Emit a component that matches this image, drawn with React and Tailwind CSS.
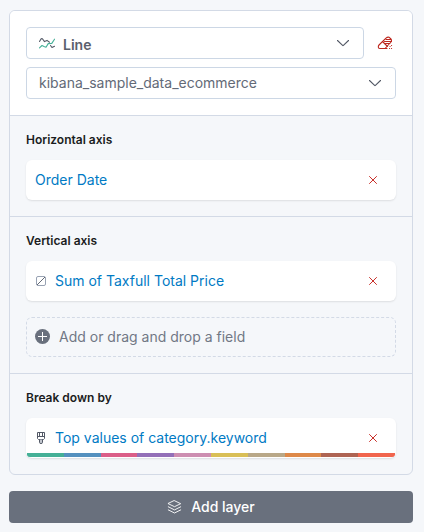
const PALETTE = [
  'bg-[#45b097]',
  'bg-[#5591bf]',
  'bg-[#db5e88]',
  'bg-[#9370b8]',
  'bg-[#cd8eb1]',
  'bg-[#d9bf57]',
  'bg-[#b9a888]',
  'bg-[#de8949]',
  'bg-[#ae6453]',
  'bg-[#f1654e]',
];

function LineChartIcon() {
  return (
    <svg width="16" height="12" viewBox="0 0 16 12" fill="none" strokeWidth="1.1" strokeLinecap="round" strokeLinejoin="round" aria-hidden="true">
      <path d="M0.5 4.5 2 2Q2.8 1.2 3.6 2L5.5 4.6 8 3.4 10.5 5.2M11.5 8.5 13 10.5 15.5 9.2" stroke="#535966" />
      <path d="M0.5 10.8 3 8.5 5 9.5 7 10.3 9.2 6.6 12.8 6.4 15.5 2.2" stroke="#45b097" />
    </svg>
  );
}

function ChevronIcon() {
  return (
    <svg width="16" height="16" viewBox="0 0 16 16" fill="none" stroke="#535966" strokeWidth="1.1" strokeLinecap="round" strokeLinejoin="round" aria-hidden="true">
      <path d="M2.5 5.5 7.6 10.4Q8 10.8 8.4 10.4L13.5 5.5" />
    </svg>
  );
}

function EraserIcon() {
  return (
    <svg width="16" height="16" viewBox="0 0 16 16" fill="none" stroke="#bd271e" strokeWidth="1.1" strokeLinecap="round" strokeLinejoin="round" aria-hidden="true">
      <path d="M10 13.5H2.8Q1.3 13.3 1.3 12T2 10L9 3.2Q10.5 1.8 12.2 2.3L14 4Q15 5.5 14 7L8.5 13M5.5 6.5 10.5 11.5" />
      <path d="M9 4.5H14M7.5 6.5H14.5M8.5 8.5H12.8" />
      <path d="M12.5 13.5H12.6M14.5 13.5H14.6M13 11.5H13.1M14.5 10.5H14.6" />
    </svg>
  );
}

function CrossIcon() {
  return (
    <svg width="16" height="16" viewBox="0 0 16 16" fill="none" stroke="#c9302a" strokeWidth="1" strokeLinecap="round" aria-hidden="true">
      <path d="M4.5 4.5 11.5 11.5M11.5 4.5 4.5 11.5" />
    </svg>
  );
}

function NoColorIcon() {
  return (
    <svg width="12" height="12" viewBox="0 0 12 12" fill="none" aria-hidden="true">
      <rect x="1.5" y="1.5" width="9" height="9" rx="1.5" stroke="#98a2b3" />
      <path d="M2 10 10 2" stroke="#535966" strokeWidth="0.9" />
    </svg>
  );
}

function BrushIcon() {
  return (
    <svg width="12" height="12" viewBox="0 0 12 12" fill="none" stroke="#535966" aria-hidden="true">
      <path d="M2.5 0.5H9.5V6.5L8.5 7.5H3.5L2.5 6.5ZM2.5 4.5H9.5M4.5 0.5V4.5M7.5 0.5V4.5" />
      <path d="M4.5 7.5V10.5Q4.5 11.5 6 11.5T7.5 10.5V7.5" fill="#c2c6ce" />
    </svg>
  );
}

function PlusCircleIcon() {
  return (
    <svg width="16" height="16" viewBox="0 0 16 16" fill="none" aria-hidden="true">
      <circle cx="7.5" cy="7.5" r="7.5" fill="#69707d" />
      <path d="M7.5 3V12M3 7.5H12" stroke="#fff" />
    </svg>
  );
}

function LayersIcon() {
  return (
    <svg width="16" height="16" viewBox="0 0 16 16" fill="none" stroke="#fff" strokeWidth="0.9" strokeLinejoin="round" strokeLinecap="round" aria-hidden="true">
      <path d="M7.5 1.7 13.7 4.7 7.5 7.7 1.3 4.7Z" />
      <path d="M1.3 7.8 7.5 10.9 13.7 7.8" />
      <path d="M1.3 10.9 7.5 14 13.7 10.9" />
    </svg>
  );
}

function Select({ label, value, icon, textClass }) {
  return (
    <div className="relative min-w-0 flex-1">
      {icon && <span className="pointer-events-none absolute inset-y-0 left-3 flex items-center pl-px">{icon}</span>}
      <select
        aria-label={label}
        className={`block h-8 w-full appearance-none rounded border border-[#ccd7e5] bg-white pr-9 text-sm ${textClass}`}
      >
        <option>{value}</option>
      </select>
      <span className="pointer-events-none absolute inset-y-0 right-[13px] flex items-center">
        <ChevronIcon />
      </span>
    </div>
  );
}

function Section({ title, children }) {
  return (
    <section className="border-t border-[#d3dae6] p-4">
      <h3 className="mb-3 text-xs font-semibold text-[#1a1c21]">{title}</h3>
      <div className="flex flex-col gap-4">{children}</div>
    </section>
  );
}

function Field({ name, icon, palette }) {
  return (
    <div className="flex h-10 flex-col overflow-hidden rounded-md bg-white shadow-[0_1px_2px_rgba(0,0,0,0.1)]">
      <div className="flex h-10 shrink-0 items-center gap-2 pr-[15px] pl-[9px]">
        {icon}
        <button type="button" className="min-w-0 flex-1 truncate text-left text-sm text-[#007ac4]">
          {name}
        </button>
        <button type="button" aria-label={`Remove ${name}`}>
          <CrossIcon />
        </button>
      </div>
      {palette && (
        <div className="-mt-[5px] mb-px flex h-1 shrink-0 overflow-hidden rounded-b-md px-px">
          {PALETTE.map((color) => (
            <span key={color} className={`flex-1 ${color}`} />
          ))}
        </div>
      )}
    </div>
  );
}

export default function App() {
  return (
    <main className="min-h-screen bg-[#f5f7fa] pt-[10px] pr-[11px] pb-[9px] pl-[9px] font-['Inter','Liberation_Sans',sans-serif]">
      <div className="overflow-hidden rounded-md border border-[#d3dae6]">
        <div className="flex flex-col gap-2 bg-white p-4">
          <div className="flex items-center gap-[13px]">
            <Select label="Chart type" value="Line" icon={<LineChartIcon />} textClass="pl-9 pt-1 font-semibold text-[#5a606d]" />
            <button type="button" aria-label="Clear layer" className="mr-[3px]">
              <EraserIcon />
            </button>
          </div>
          <div className="flex">
            <Select label="Data view" value="kibana_sample_data_ecommerce" textClass="pl-3 text-[#636a77]" />
          </div>
        </div>

        <Section title="Horizontal axis">
          <Field name="Order Date" />
        </Section>

        <Section title="Vertical axis">
          <Field name="Sum of Taxfull Total Price" icon={<NoColorIcon />} />
          <button
            type="button"
            className="flex h-10 items-center gap-2 rounded-md border border-dashed border-[#d3dae6] px-2 text-left text-sm text-[#717885]"
          >
            <PlusCircleIcon />
            Add or drag and drop a field
          </button>
        </Section>

        <Section title="Break down by">
          <Field name="Top values of category.keyword" icon={<BrushIcon />} palette />
        </Section>
      </div>

      <button
        type="button"
        className="mt-4 flex h-8 w-full items-center justify-center gap-2 rounded bg-[#69707d] text-sm font-medium text-white"
      >
        <LayersIcon />
        Add layer
      </button>
    </main>
  );
}
